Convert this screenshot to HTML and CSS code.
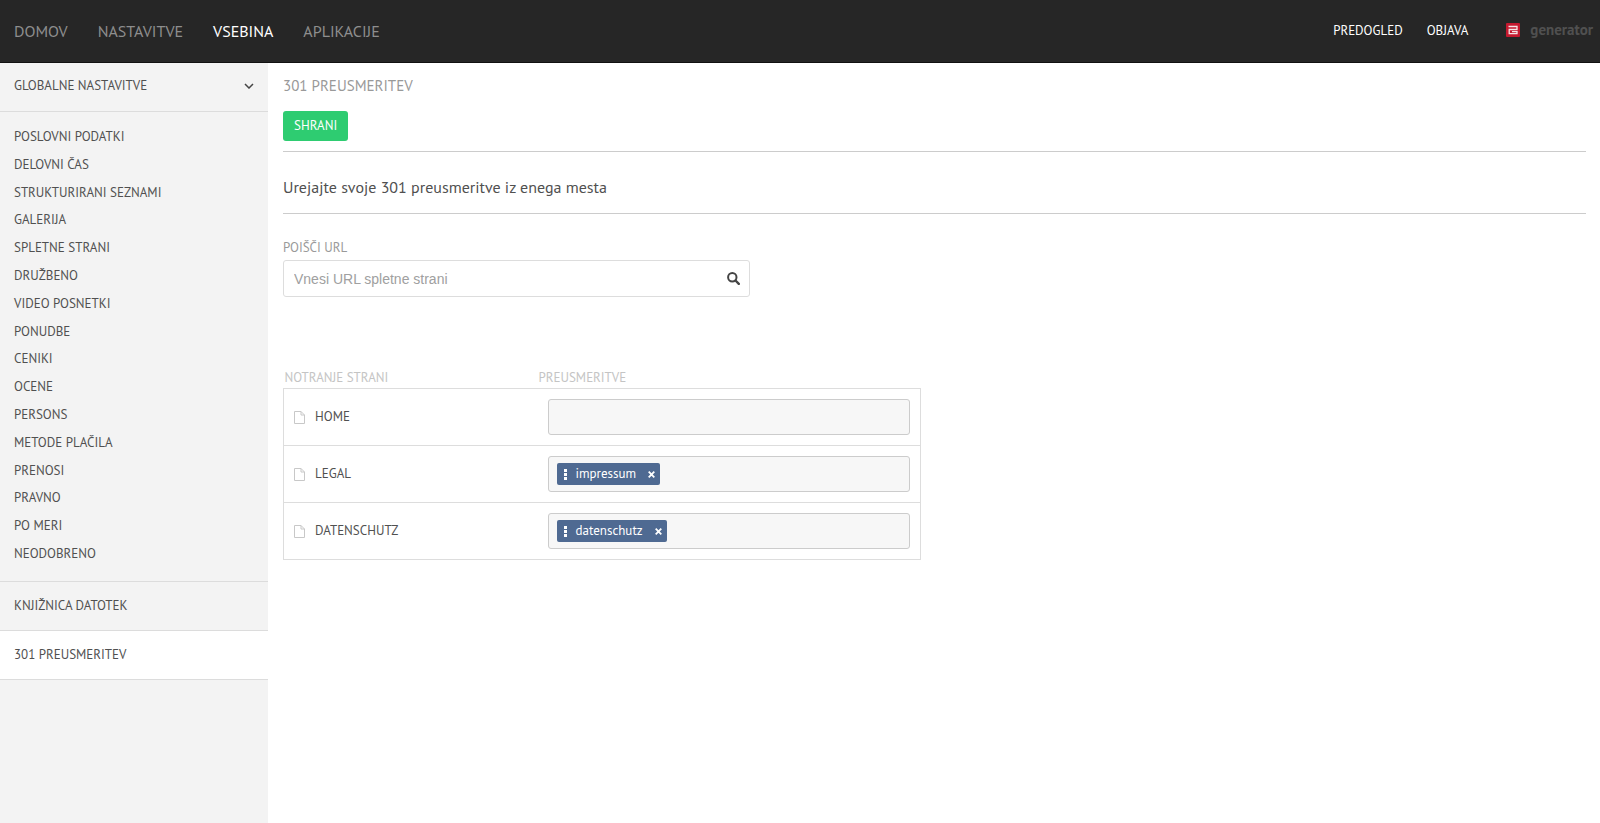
FILE: index.html
```html
<!DOCTYPE html>
<html lang="sl">
<head>
<meta charset="utf-8">
<meta name="viewport" content="width=device-width, initial-scale=1">
<title>301 preusmeritev</title>
<link rel="stylesheet" href="styles.css">
</head>
<body>
<header class="topbar">
  <nav class="main-nav">
    <a href="#">DOMOV</a>
    <a href="#">NASTAVITVE</a>
    <a href="#" class="active">VSEBINA</a>
    <a href="#">APLIKACIJE</a>
  </nav>
  <nav class="side-nav">
    <a href="#">PREDOGLED</a>
    <a href="#">OBJAVA</a>
    <a href="#" class="brand">
      <svg class="brand-mark" viewBox="0 0 14 14" aria-hidden="true"><rect width="14" height="14" rx="1" fill="#c4192f"/><path d="M2.500 3.500H11v3H5.500M11 6.500H3.200v4.200H11V8.600H6" fill="none" stroke="#f6e4e6" stroke-width="1.300"/></svg>
      <span>generator</span>
    </a>
  </nav>
</header>
<div class="layout">
  <aside class="sidebar">
    <button class="group" type="button">GLOBALNE NASTAVITVE
      <svg class="chevron" viewBox="0 0 10 6" aria-hidden="true"><path d="M1 1l4 4 4-4" fill="none" stroke="#444" stroke-width="1.500"/></svg>
    </button>
    <ul class="menu">
      <li><a href="#">POSLOVNI PODATKI</a></li>
      <li><a href="#">DELOVNI ČAS</a></li>
      <li><a href="#">STRUKTURIRANI SEZNAMI</a></li>
      <li><a href="#">GALERIJA</a></li>
      <li><a href="#">SPLETNE STRANI</a></li>
      <li><a href="#">DRUŽBENO</a></li>
      <li><a href="#">VIDEO POSNETKI</a></li>
      <li><a href="#">PONUDBE</a></li>
      <li><a href="#">CENIKI</a></li>
      <li><a href="#">OCENE</a></li>
      <li><a href="#">PERSONS</a></li>
      <li><a href="#">METODE PLAČILA</a></li>
      <li><a href="#">PRENOSI</a></li>
      <li><a href="#">PRAVNO</a></li>
      <li><a href="#">PO MERI</a></li>
      <li><a href="#">NEODOBRENO</a></li>
    </ul>
    <a class="section" href="#">KNJIŽNICA DATOTEK</a>
    <a class="section current" href="#">301 PREUSMERITEV</a>
  </aside>
  <main class="content">
    <div class="head">
      <h1>301 PREUSMERITEV</h1>
      <button class="save" type="button">SHRANI</button>
    </div>
    <p class="intro">Urejajte svoje 301 preusmeritve iz enega mesta</p>
    <form class="search">
      <label for="url">POIŠČI URL</label>
      <div class="field">
        <input id="url" type="text" placeholder="Vnesi URL spletne strani">
        <button type="button" aria-label="Išči"><svg class="lens" viewBox="0 0 13 13" aria-hidden="true"><circle cx="5.300" cy="5.300" r="4.200" fill="none" stroke="#444" stroke-width="2"/><path d="M8.500 8.500l3.300 3.300" stroke="#444" stroke-width="2.400" stroke-linecap="round"/></svg></button>
      </div>
    </form>
    <table class="redirects">
      <thead>
        <tr><th>NOTRANJE STRANI</th><th>PREUSMERITVE</th></tr>
      </thead>
      <tbody>
        <tr>
          <td><span class="page"><svg class="doc" viewBox="0 0 11 13" aria-hidden="true"><path d="M.5.5h6.500l3.500 3.500v8.500H.5zM7 .5V4h3.500" fill="none" stroke="#c8c8c8"/></svg>HOME</span></td>
          <td><div class="tags"></div></td>
        </tr>
        <tr>
          <td><span class="page"><svg class="doc" viewBox="0 0 11 13" aria-hidden="true"><path d="M.5.5h6.500l3.500 3.500v8.500H.5zM7 .5V4h3.500" fill="none" stroke="#c8c8c8"/></svg>LEGAL</span></td>
          <td><div class="tags"><span class="tag"><svg class="grip" viewBox="0 0 3 11" aria-hidden="true"><path d="M0 0h3v3H0zM0 4h3v3H0zM0 8h3v3H0z" fill="#fff"/></svg>impressum<button type="button" aria-label="Odstrani impressum"><svg class="cross" viewBox="0 0 7 7" aria-hidden="true"><path d="M.7.7l5.600 5.600M6.300.7L.7 6.300" stroke="#fff" stroke-width="1.800"/></svg></button></span></div></td>
        </tr>
        <tr>
          <td><span class="page"><svg class="doc" viewBox="0 0 11 13" aria-hidden="true"><path d="M.5.5h6.500l3.500 3.500v8.500H.5zM7 .5V4h3.500" fill="none" stroke="#c8c8c8"/></svg>DATENSCHUTZ</span></td>
          <td><div class="tags"><span class="tag"><svg class="grip" viewBox="0 0 3 11" aria-hidden="true"><path d="M0 0h3v3H0zM0 4h3v3H0zM0 8h3v3H0z" fill="#fff"/></svg>datenschutz<button type="button" aria-label="Odstrani datenschutz"><svg class="cross" viewBox="0 0 7 7" aria-hidden="true"><path d="M.7.7l5.600 5.600M6.300.7L.7 6.300" stroke="#fff" stroke-width="1.800"/></svg></button></span></div></td>
        </tr>
      </tbody>
    </table>
  </main>
</div>
</body>
</html>
```
FILE: styles.css
```css
* { box-sizing: border-box; }
body {
  margin: 0;
  min-height: 100vh;
  display: flex;
  flex-direction: column;
  font: 13px/20px "PT Sans", "Noto Sans", sans-serif;
  color: #505050;
  background: #fff;
}
a { color: inherit; text-decoration: none; }
button { font: inherit; color: inherit; border: 0; background: none; padding: 0; cursor: pointer; }
svg { display: block; }

.topbar {
  display: flex;
  justify-content: space-between;
  align-items: center;
  height: 63px;
  padding: 0 7px 0 14px;
  background: #262626;
  border-bottom: 1px solid #111;
}
.main-nav { display: flex; gap: 30px; font-size: 16px; color: #8e8e8e; }
.main-nav .active { color: #fff; }
.side-nav { display: flex; align-items: center; gap: 24px; color: #fff; }
.brand { display: flex; align-items: center; gap: 10px; margin-left: 14px; padding-bottom: 2px; font-size: 15px; font-weight: 700; color: #505050; }
.brand-mark { width: 14px; height: 14px; }

.layout { display: flex; flex: 1; }
.sidebar { width: 268px; flex: none; background: #f3f3f3; }
.group {
  display: flex;
  justify-content: space-between;
  align-items: center;
  width: 100%;
  padding: 13px 14px 15px;
  border-bottom: 1px solid #dcdcdc;
}
.chevron { width: 10px; height: 6px; }
.menu {
  display: flex;
  flex-direction: column;
  justify-content: space-between;
  min-height: 470px;
  list-style: none;
  margin: 0;
  padding: 15px 0 17px;
  border-bottom: 1px solid #dcdcdc;
}
.menu a { display: block; padding: 0 14px; }
.section { display: block; padding: 14px; border-bottom: 1px solid #dcdcdc; }
.current { background: #fff; }

.content { flex: 1; padding: 13px 14px 24px 15px; }
.head { padding-bottom: 10px; border-bottom: 1px solid #ccc; }
h1 { margin: 0 0 15px; font-size: 15px; line-height: 20px; font-weight: 400; color: #999; }
.save { display: block; height: 30px; padding: 0 11px; border-radius: 3px; background: #2ecc71; color: #fff; }
.intro { margin: 0; padding: 25px 0 16px; border-bottom: 1px solid #ccc; font-size: 16px; }
.search { width: 467px; max-width: 100%; padding-top: 24px; }
.search label { display: block; margin-bottom: 2px; color: #999; }
.field { display: flex; height: 37px; border: 1px solid #ddd; border-radius: 3px; }
.field input {
  flex: 1;
  min-width: 0;
  padding: 0 10px;
  border: 0;
  background: none;
  font: 14px "Liberation Sans", sans-serif;
  color: #505050;
}
.field input::placeholder { color: #a0a0a0; }
.field button { padding: 0 9px; }
.lens { width: 13px; height: 13px; }

.redirects { width: 638px; max-width: 100%; margin-top: 71px; border-collapse: collapse; table-layout: fixed; }
.redirects th { padding: 0 0 0 1px; font-weight: 400; text-align: left; color: #c4c4c4; }
.redirects th:first-child { width: 254px; }
.redirects tbody { border: 1px solid #ddd; }
.redirects tbody tr { border-top: 1px solid #ddd; }
.redirects td { padding: 10px; }
.page { display: flex; align-items: center; gap: 10px; }
.doc { width: 11px; height: 13px; }
.tags { display: flex; align-items: center; height: 36px; padding: 0 8px; border: 1px solid #ccc; border-radius: 3px; background: #f7f7f7; }
.tag { display: flex; align-items: center; height: 22px; padding: 0 5px 0 7px; border-radius: 2px; background: #4f6a92; color: #fff; }
.grip { width: 3px; height: 11px; margin-right: 9px; }
.tag button { margin-left: 12px; }
.cross { width: 7px; height: 7px; }
```
